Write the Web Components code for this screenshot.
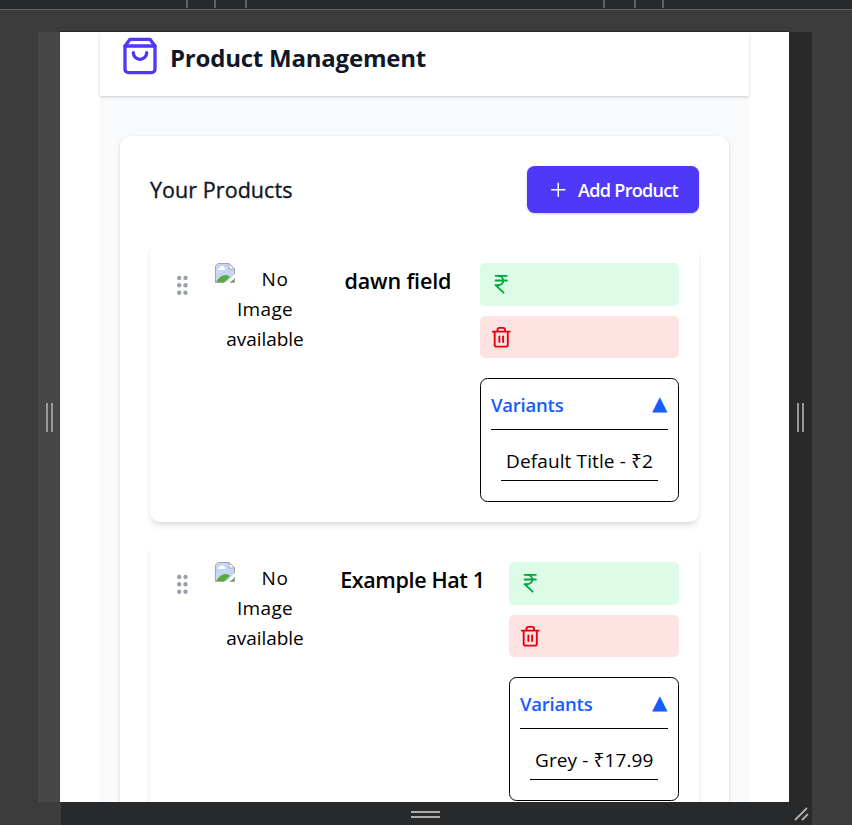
<!DOCTYPE html>
<html lang="en">
<head>
<meta charset="utf-8">
<title>Product Management</title>
<style>
html,body{margin:0;height:100%;overflow:hidden;background:#3c3c3c}
body{font-family:"Open Sans","Noto Sans",sans-serif;font-size:19px;color:#000}
</style>
</head>
<body>
<device-frame>
  <page-header>Product Management</page-header>
  <product-panel>
    <fit-text slot="title" width="142.5">Your Products</fit-text>
    <add-button slot="action">Add Product</add-button>
    <product-card name="dawn field" name-width="107" column="199" variant="Default Title - ₹2" variant-width="147"></product-card>
    <product-card name="Example Hat 1" name-width="144.5" column="170" variant="Grey - ₹17.99" variant-width="118.5"></product-card>
  </product-panel>
</device-frame>
<script>
class Base extends HTMLElement{
  connectedCallback(){
    if(this.shadowRoot)return;
    this.attachShadow({mode:'open'}).innerHTML='<style>*{box-sizing:border-box}:host{display:block;box-sizing:border-box}</style>'+this.view();
    this.ready&&this.ready();
  }
}
customElements.define('ui-icon',class extends Base{
  view(){
    const p={
      bag:'<path d="M6 2 3 6v14a2 2 0 0 0 2 2h14a2 2 0 0 0 2-2V6l-3-4Z"/><path d="M3 6h18"/><path d="M16 10a4 4 0 0 1-8 0"/>',
      plus:'<path stroke-width="1.6" d="M5 12.500h14M12 5.500v14"/>',
      rupee:'<path d="M6 3h12M6 8h12M6 13l8.5 8M6 13h3"/><path d="M9 13c6.667 0 6.667-10 0-10"/>',
      trash:'<path d="M3 6h18M19 6v14c0 1-1 2-2 2H7c-1 0-2-1-2-2V6M8 6V4c0-1 1-2 2-2h4c1 0 2 1 2 2v2M10 11v6M14 11v6"/>'
    }[this.getAttribute('name')];
    const s=this.getAttribute('size');
    return `<style>:host{flex:none;width:${s}px;height:${s}px}svg{display:block}</style><svg width="${s}" height="${s}" viewBox="0 0 24 24" fill="none" stroke="currentColor" stroke-width="2" stroke-linecap="round" stroke-linejoin="round">${p}</svg>`;
  }
});
customElements.define('device-frame',class extends Base{
  view(){return `<style>
  :host{width:852px;height:825px;display:grid;grid-template-columns:38px 22px 729px 23px 40px;grid-template-rows:10px 22px 770px 23px;background:#3c3c3c;overflow:hidden}
  .ruler{grid-column:1/-1;background:#28292a;border-bottom:1px solid #5e6163}
  .ruler svg{display:block}
  .h{grid-row:3;display:flex;align-items:center;justify-content:center;gap:3px}
  .h i{width:2px;height:29px;background:#999}
  .l{grid-column:2;background:#474747;padding-left:1px}
  .r{grid-column:4;background:#28292a}
  .page{grid-column:3;grid-row:3;background:#fff;overflow:hidden;padding:0 40px;box-shadow:0 -1px 1px #292929}
  .app{height:100%;background:#f9fafb;display:flex;flex-direction:column}
  .b{grid-column:3/5;grid-row:4;margin-left:1px;background:#28292a;display:grid;grid-template-columns:23px 1fr 23px;align-items:center;justify-items:center}
  .b div{display:grid;gap:3px;margin:2px 0 0 -23px}.b div i{width:29px;height:2px;background:#aaa}
  .b svg{margin-left:1px}
  </style>
  <div class="ruler"><svg width="852" height="9" fill="#5e6163"><path d="M186 0h2v8h-2zM214 0h2v8h-2zM245 0h2v8h-2zM603 0h2v8h-2zM634 0h2v8h-2zM662 0h2v8h-2z"/></svg></div>
  <div class="h l"><i></i><i></i></div>
  <div class="page"><div class="app"><slot></slot></div></div>
  <div class="h r"><i></i><i></i></div>
  <div class="b"><span></span><div><i></i><i></i></div><svg width="15" height="14" stroke="#aaa" stroke-width="2"><path d="M1 13 13 1M8 13l6-6"/></svg></div>`}
});
customElements.define('page-header',class extends Base{
  view(){return `<style>:host{height:64px;flex:none;background:#fff;padding:4px 20px 0;display:flex;gap:10px;align-items:flex-start;box-shadow:0 1px 4px #0000001a,0 1px 2px #0000001a;color:#101828;font-size:24px;font-weight:700;line-height:44px}
  ui-icon{color:#4f39f6}</style><ui-icon name="bag" size="40"></ui-icon><fit-text width="256">${this.textContent}</fit-text>`}
});
customElements.define('add-button',class extends Base{
  view(){return `<style>:host{width:172px;height:47px;border-radius:7.5px;background:#4f39f6;color:#fff;font-size:18px;font-weight:600;display:flex;align-items:center;gap:8.5px;padding-left:20px;line-height:47px;-webkit-text-stroke:0;box-shadow:0 1px 3px #0000001a,0 1px 2px #0000001a}fit-text{padding-top:2px}</style><ui-icon name="plus" size="22.5"></ui-icon><fit-text width="100">${this.textContent}</fit-text>`}
});
customElements.define('product-panel',class extends Base{
  view(){return `<style>:host{margin:40px 20px 0;flex:none;height:900px;background:#fff;border-radius:10px;padding:30px;box-shadow:0 1px 4px #0000001a,0 1px 2px #0000001a}
  .head{display:flex;justify-content:space-between;align-items:center;height:47px;font-size:21.5px;font-weight:500;color:#101828}.list{display:grid;gap:20px;margin-top:30px}
  slot[name=title]::slotted(*){-webkit-text-stroke:.35px #101828}</style>
  <div class="head"><slot name="title"></slot><slot name="action"></slot></div><div class="list"><slot></slot></div>`}
});
customElements.define('broken-image',class extends Base{
  view(){return `<style>:host{width:100px;text-align:center;line-height:30px;font-size:19px}
  .first{display:flex;height:31px}.first svg{flex:none}.first span{flex:1;padding-top:1px}p{margin:0}</style>
  <div class="first"><svg width="20" height="20" viewBox="0 0 20 20"><path d="M.5 19.5V3L3 .5h11L19.5 6v5.5L11 19.5z" fill="#c5d7f5"/><path d="M3 7c0-2 2-2 2.500-3C7 2 9 3 9 5c2 0 2 2 1 2z" fill="#fff"/><path d="M1 19.500C3 15 7 12 11 12c2 0 3 1 4 2l-6 5.500zM15 19.500l4-3.500v3.500z" fill="#58ab39"/><path d="M.5 19.500V3L3 .5h11L19.500 6v5M19.500 15v4.500H15M.5 19.500H9" fill="none" stroke="#a6a6a6"/><path d="M14 .5V6h5.500z" fill="#fff" stroke="#a6a6a6"/></svg><span><fit-text width="27">No</fit-text></span></div>
  <p><fit-text width="56">Image</fit-text></p><p><fit-text width="77.5">available</fit-text></p>`}
});
customElements.define('variant-box',class extends Base{
  view(){return `<style>:host{height:124px;border:1px solid #000;border-radius:7.5px;padding:0 10px;margin-top:10px}
  .top{height:51px;border-bottom:1px solid #000;display:flex;justify-content:space-between;align-items:center;color:#155dfc;font-weight:600;font-size:18.500px}
  .top b{font:20px/30px "DejaVu Sans",sans-serif;margin-right:.5px;padding-bottom:2px}
  .item{margin:10px 10px 0;height:41px;border-bottom:1px solid #000;padding:6px 0 0 5px;line-height:30px;white-space:nowrap}</style>
  <div class="top"><fit-text width="72.5">Variants</fit-text><b>▲</b></div><div class="item"><fit-text width="${this.getAttribute('text-width')}">${this.getAttribute('text')}</fit-text></div>`}
});
customElements.define('product-card',class extends Base{
  view(){const a=n=>this.getAttribute(n);return `<style>:host{height:279px;border-radius:10px;background:#fff;padding:20px;display:grid;grid-template-columns:45px 100px 1fr ${a('column')}px;box-shadow:0 5px 7px -1px #0000001a,0 2px 4px -2px #0000001a}
  .grip{padding:12px 0 0 6.400px}.grip svg{display:block}
  h3{margin:0;padding-left:.8px;text-align:center;font-size:21.500px;font-weight:600;line-height:35px}
  .side{display:flex;flex-direction:column;gap:10px}
  .btn{height:42.500px;border-radius:5px;padding:10px;flex:none}.g{background:#dcfce7;color:#00a63e}.d{background:#ffe2e2;color:#e7000b}</style>
  <div class="grip"><svg width="13" height="20" fill="#99a1af"><circle cx="3.200" cy="2.900" r="2.200"/><circle cx="9.500" cy="2.900" r="2.200"/><circle cx="3.200" cy="10.300" r="2.200"/><circle cx="9.500" cy="10.300" r="2.200"/><circle cx="3.200" cy="17.700" r="2.200"/><circle cx="9.500" cy="17.700" r="2.200"/></svg></div>
  <broken-image></broken-image><h3><fit-text width="${a('name-width')}">${a('name')}</fit-text></h3>
  <div class="side"><div class="btn g"><ui-icon name="rupee" size="22.5"></ui-icon></div><div class="btn d"><ui-icon name="trash" size="22.5"></ui-icon></div><variant-box text="${a('variant')}" text-width="${a('variant-width')}"></variant-box></div>`}
});
// One line of text whose tracking is set so that it fills the given width.
// Defined last: the styles it inherits have to be in place when it measures.
customElements.define('fit-text',class extends Base{
  view(){return `<style>:host{display:inline-block;white-space:nowrap}</style><span><slot></slot></span>`}
  ready(){
    const w=+this.getAttribute('width'),s=this.shadowRoot.querySelector('span');
    const now=s.getBoundingClientRect().width;
    s.style.letterSpacing=((w-now)/this.textContent.length)+'px';
  }
});
</script>
</body>
</html>
